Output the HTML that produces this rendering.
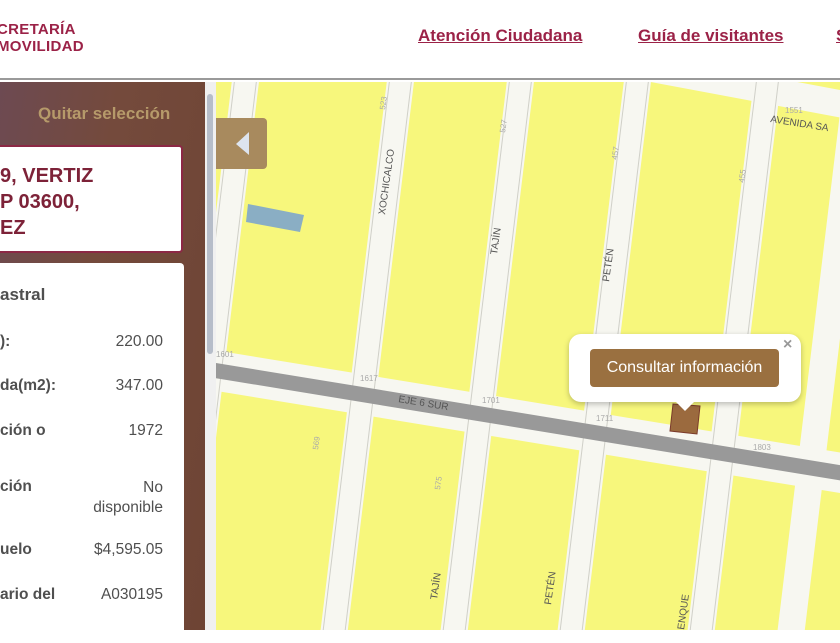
<!DOCTYPE html>
<html><head><meta charset="utf-8"><style>
*{margin:0;padding:0;box-sizing:border-box}
body{width:840px;height:630px;overflow:hidden;background:#fff;font-family:"Liberation Sans",Arial,sans-serif;position:relative}
.hdr{position:absolute;left:0;top:0;width:840px;height:80px;background:#fff;border-bottom:2px solid #9a9a9a}
.logo{position:absolute;left:-3px;top:21px;color:#9b2247;font-weight:bold;font-size:15px;line-height:17px;letter-spacing:0.3px}
.nav{position:absolute;top:26px;color:#9b2247;font-weight:bold;font-size:17px;text-decoration:underline;font-family:"Liberation Sans",sans-serif}
.left{position:absolute;left:0;top:82px;width:205px;height:548px;background:linear-gradient(100deg,#6d4a52 0%,#744a3c 40%,#6e4434 100%)}
.sb{position:absolute;left:205px;top:82px;width:11px;height:548px;background:#f0f0f0}
.sb i{position:absolute;left:2px;top:12px;width:6px;height:260px;background:#b6bdc9;border-radius:3px}
.q{position:absolute;left:38px;top:104px;color:#b69a6a;font-weight:bold;font-size:17px}
.c1{position:absolute;left:-10px;top:145px;width:193px;height:108px;background:#fff;border:2px solid #8c2845;border-radius:4px}
.c1 div{position:absolute;left:8px;top:16px;color:#7d2238;font-weight:bold;font-size:20px;line-height:26px}
.c2{position:absolute;left:-10px;top:263px;width:194px;height:380px;background:#fff;border-radius:4px}
.r{position:absolute;color:#4f4f4f;font-size:15.5px}
.l{left:0;font-weight:bold}
.v{text-align:right;width:120px;right:21px}
.map{position:absolute;left:216px;top:82px;width:624px;height:548px;overflow:hidden}
.pop{position:absolute;left:569px;top:334px;width:232px;height:68px;background:#fff;border-radius:12px;box-shadow:0 2px 6px rgba(0,0,0,.25)}
.btn{position:absolute;left:590px;top:349px;width:189px;height:38px;background:#9a7040;border-radius:4px;color:#fff;font-size:16px;text-align:center;line-height:38px}
.x{position:absolute;left:783px;top:336px;color:#999;font-size:16px;font-weight:bold}
.tog{position:absolute;left:216px;top:118px;width:51px;height:51px;background:#a88a5e;border-radius:0 4px 4px 0}
</style></head><body>
<div class="hdr">
<div class="logo">CRETARÍA<br>MOVILIDAD</div>
<div class="nav" style="left:418px">Atención Ciudadana</div>
<div class="nav" style="left:638px">Guía de visitantes</div>
<div class="nav" style="left:836px">S</div>
</div>
<div class="left"></div>
<div class="q">Quitar selección</div>
<div class="c1"><div>9, VERTIZ<br>P 03600,<br>EZ</div></div>
<div class="c2">
<div class="r l" style="left:10px;top:22px;font-size:17px">astral</div>
<div class="r l" style="left:10px;top:70px">):</div><div class="r v" style="top:70px">220.00</div>
<div class="r l" style="left:10px;top:114px">da(m2):</div><div class="r v" style="top:114px">347.00</div>
<div class="r l" style="left:10px;top:159px">ción o</div><div class="r v" style="top:159px">1972</div>
<div class="r l" style="left:10px;top:215px">ción</div><div class="r v" style="top:215px;line-height:20px">No<br>disponible</div>
<div class="r l" style="left:10px;top:278px">uelo</div><div class="r v" style="top:278px">$4,595.05</div>
<div class="r l" style="left:10px;top:323px">ario del</div><div class="r v" style="top:323px">A030195</div>
</div>
<div class="sb"><i></i></div>
<div class="map">
<svg width="624" height="548" viewBox="216 82 624 548" xmlns="http://www.w3.org/2000/svg" font-family="Liberation Sans,sans-serif">
<rect x="216" y="82" width="624" height="548" fill="#f7f77c"/>
<g stroke="#f7f7f1" stroke-width="27" stroke-linecap="butt">
<line x1="248" y1="60" x2="178" y2="640"/>
<line x1="403" y1="60" x2="333" y2="640"/>
<line x1="523" y1="60" x2="453" y2="640"/>
<line x1="640" y1="60" x2="570" y2="640"/>
<line x1="770" y1="60" x2="700" y2="640"/>
<line x1="860" y1="60" x2="790" y2="640"/>
<line x1="500" y1="40" x2="900" y2="115"/>
<line x1="200" y1="368" x2="860" y2="476" stroke-width="40"/>
</g>
<g stroke="#d0d0c8" stroke-width="1" fill="none">
<line x1="237" y1="60" x2="167" y2="640"/><line x1="259" y1="60" x2="189" y2="640"/>
<line x1="392" y1="60" x2="322" y2="640"/><line x1="414" y1="60" x2="344" y2="640"/>
<line x1="512" y1="60" x2="442" y2="640"/><line x1="534" y1="60" x2="464" y2="640"/>
<line x1="629" y1="60" x2="559" y2="640"/><line x1="651" y1="60" x2="581" y2="640"/>
<line x1="759" y1="60" x2="689" y2="640"/><line x1="781" y1="60" x2="711" y2="640"/>
</g>
<line x1="200" y1="368" x2="860" y2="476" stroke="#999" stroke-width="15"/>
<polygon points="248,204 304,215 300,232 246,222" fill="#8aaec4"/>
<polygon points="673,404 700,406 697,434 670,431" fill="#9b6a3e" stroke="#7a3a2a"/>
<g fill="#555" font-size="10">
<text transform="translate(385,215) rotate(-82)">XOCHICALCO</text>
<text transform="translate(497,255) rotate(-82)">TAJÍN</text>
<text transform="translate(609,282) rotate(-82)">PETÉN</text>
<text transform="translate(437,600) rotate(-82)">TAJÍN</text>
<text transform="translate(551,605) rotate(-82)">PETÉN</text>
<text transform="translate(684,630) rotate(-82)">ENQUE</text>
<text transform="translate(770,122) rotate(9)">AVENIDA SA</text>
<text transform="translate(398,402) rotate(9.3)">EJE 6 SUR</text>
</g>
<g fill="#aaa" font-size="8">
<text x="785" y="113">1551</text><text x="216" y="357">1601</text><text x="360" y="381">1617</text>
<text x="482" y="403">1701</text><text x="596" y="421">1711</text><text x="753" y="450">1803</text>
<text transform="translate(385,110) rotate(-82)">523</text><text transform="translate(505,133) rotate(-82)">527</text>
<text transform="translate(617,160) rotate(-82)">457</text><text transform="translate(744,183) rotate(-82)">455</text>
<text transform="translate(318,450) rotate(-82)">569</text><text transform="translate(440,490) rotate(-82)">575</text>
</g>
</svg>
</div>
<div class="tog"><svg width="51" height="51"><polygon points="33,14 33,37 20,26" fill="#dde4ee"/></svg></div>
<div class="pop"></div>
<svg style="position:absolute;left:674px;top:400px" width="22" height="12"><polygon points="0,0 22,0 11,11" fill="#fff"/></svg>
<div class="btn">Consultar información</div>
<div class="x">×</div>
</body></html>
